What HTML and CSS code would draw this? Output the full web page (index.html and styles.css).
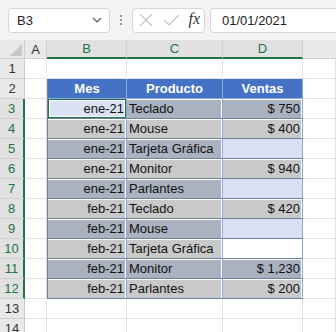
FILE: index.html
```html
<!DOCTYPE html>
<html lang="es">
<head>
    <meta charset="UTF-8">
    <title>Hoja de ventas</title>
    <link rel="stylesheet" href="styles.css">
</head>
<body>
    <!-- Formula bar -->
    <div class="toolbar">
        <div class="namebox">
            <span>B3</span>
            <svg width="12" height="8" viewBox="0 0 12 8"><path d="M2 2 L6 6 L10 2" fill="none" stroke="#555" stroke-width="1.2"/></svg>
        </div>
        <div class="dots"><i></i><i></i><i></i></div>
        <div class="fnbox">
            <svg width="16" height="16" viewBox="0 0 16 16"><path d="M2 2 L14 14 M14 2 L2 14" stroke="#c4c4c4" stroke-width="1.2"/></svg>
            <svg width="18" height="16" viewBox="0 0 18 16"><path d="M2 8 L7 13 L17 3" fill="none" stroke="#c4c4c4" stroke-width="1.2"/></svg>
            <span class="fx">fx</span>
        </div>
        <div class="formula">01/01/2021</div>
    </div>

    <!-- Sheet -->
    <div class="sheet">
        <div class="corner"><span class="tri"></span></div>
        <div class="colhead">A</div>
        <div class="colhead sel">B</div>
        <div class="colhead sel">C</div>
        <div class="colhead sel">D</div>
        <div class="colhead blank"></div>

        <div class="rowhead">1</div>
        <div class="cell"></div><div class="cell"></div><div class="cell"></div><div class="cell"></div><div class="cell"></div>

        <div class="rowhead">2</div>
        <div class="cell"></div>
        <div class="cell th first">Mes</div>
        <div class="cell th">Producto</div>
        <div class="cell th">Ventas</div>
        <div class="cell"></div>

        <div class="rowhead sel">3</div>
        <div class="cell"></div>
        <div class="cell td first num lb active">ene-21</div>
        <div class="cell td g2">Teclado</div>
        <div class="cell td num g2">$ 750</div>
        <div class="cell"></div>

        <div class="rowhead sel">4</div>
        <div class="cell"></div>
        <div class="cell td first num g1">ene-21</div>
        <div class="cell td g1">Mouse</div>
        <div class="cell td num g1">$ 400</div>
        <div class="cell"></div>

        <div class="rowhead sel">5</div>
        <div class="cell"></div>
        <div class="cell td first num g2">ene-21</div>
        <div class="cell td g2">Tarjeta Gráfica</div>
        <div class="cell td num lb"></div>
        <div class="cell"></div>

        <div class="rowhead sel">6</div>
        <div class="cell"></div>
        <div class="cell td first num g1">ene-21</div>
        <div class="cell td g1">Monitor</div>
        <div class="cell td num g1">$ 940</div>
        <div class="cell"></div>

        <div class="rowhead sel">7</div>
        <div class="cell"></div>
        <div class="cell td first num g2">ene-21</div>
        <div class="cell td g2">Parlantes</div>
        <div class="cell td num lb"></div>
        <div class="cell"></div>

        <div class="rowhead sel">8</div>
        <div class="cell"></div>
        <div class="cell td first num g1">feb-21</div>
        <div class="cell td g1">Teclado</div>
        <div class="cell td num g1">$ 420</div>
        <div class="cell"></div>

        <div class="rowhead sel">9</div>
        <div class="cell"></div>
        <div class="cell td first num g2">feb-21</div>
        <div class="cell td g2">Mouse</div>
        <div class="cell td num lb"></div>
        <div class="cell"></div>

        <div class="rowhead sel">10</div>
        <div class="cell"></div>
        <div class="cell td first num g1">feb-21</div>
        <div class="cell td g1">Tarjeta Gráfica</div>
        <div class="cell td num"></div>
        <div class="cell"></div>

        <div class="rowhead sel">11</div>
        <div class="cell"></div>
        <div class="cell td first num g2">feb-21</div>
        <div class="cell td g2">Monitor</div>
        <div class="cell td num g2">$ 1,230</div>
        <div class="cell"></div>

        <div class="rowhead sel">12</div>
        <div class="cell"></div>
        <div class="cell td first num g1">feb-21</div>
        <div class="cell td g1">Parlantes</div>
        <div class="cell td num g1">$ 200</div>
        <div class="cell"></div>

        <div class="rowhead">13</div>
        <div class="cell"></div><div class="cell"></div><div class="cell"></div><div class="cell"></div><div class="cell"></div>

        <div class="rowhead">14</div>
        <div class="cell"></div><div class="cell"></div><div class="cell"></div><div class="cell"></div><div class="cell"></div>
    </div>
</body>
</html>
```

FILE: styles.css
```css
body {
    margin: 0;
    font-family: 'Liberation Sans', Arial, sans-serif;
    background-color: #fff;
    width: 336px;
    height: 332px;
    overflow: hidden;
}

/* Formula bar */
.toolbar {
    display: flex;
    align-items: center;
    height: 40px;
    padding: 0 0 0 8px;
    background-color: #f3f3f3;
    box-sizing: border-box;
}

.namebox, .fnbox, .formula {
    height: 25px;
    box-sizing: border-box;
    background-color: #fff;
    border: 1px solid #d6d6d6;
    border-radius: 4px;
    display: flex;
    align-items: center;
    font-size: 13px;
    color: #222;
}

.namebox {
    width: 102px;
    padding: 0 6px 0 8px;
    justify-content: space-between;
}

.dots {
    width: 22px;
    display: flex;
    flex-direction: column;
    align-items: center;
    gap: 2px;
}

.dots i {
    width: 2px;
    height: 2px;
    background-color: #999;
}

.fnbox {
    width: 73px;
    padding: 0 4px 0 5px;
    justify-content: space-between;
}

.fx {
    font-family: 'Liberation Serif', serif;
    font-style: italic;
    font-size: 16px;
    color: #333;
    padding-bottom: 2px;
}

.formula {
    flex: 1;
    margin-left: 5px;
    padding-left: 11px;
    border-right: none;
    border-radius: 4px 0 0 4px;
}

/* Sheet grid */
.sheet {
    display: grid;
    grid-template-columns: 25px 22px 80px 96px 80px 1fr;
    grid-template-rows: 19px repeat(14, 20px);
    font-size: 13px;
}

.corner, .colhead, .rowhead {
    background-color: #e9e9e9;
    color: #333;
    box-sizing: border-box;
    display: flex;
    align-items: center;
    justify-content: center;
    border-right: 1px solid #d0d0d0;
    border-bottom: 1px solid #d0d0d0;
}

.corner {
    position: relative;
}

.tri {
    position: absolute;
    right: 2px;
    bottom: 2px;
    width: 0;
    height: 0;
    border-left: 12px solid transparent;
    border-bottom: 12px solid #c6c6c6;
}

.colhead.sel {
    color: #217346;
    background-color: #e1e1e1;
    border-bottom: 2px solid #217346;
}

.colhead.blank {
    border-right: none;
}

.rowhead {
    border-right: 1px solid #c8c8c8;
}

.rowhead.sel {
    color: #217346;
    background-color: #e1e1e1;
    border-right: 2px solid #217346;
}

.cell {
    box-sizing: border-box;
    border-right: 1px solid #e1e1e1;
    border-bottom: 1px solid #e1e1e1;
    display: flex;
    align-items: center;
    padding: 0 2px;
    color: #111;
    white-space: nowrap;
}

/* Table */
.th {
    background-color: #4472c4;
    color: #fff;
    font-weight: bold;
    justify-content: center;
    border-right: 1px solid #8ea9db;
    border-bottom: 1px solid #8ea9db;
}

.td {
    border-right: 1px solid #8ea9db;
    border-bottom: 1px solid #6f80a3;
}

.first {
    border-left: 1px solid #6f80a3;
}

.num {
    justify-content: flex-end;
}

.lb {
    background-color: #d9e1f2;
}

.g1 {
    background-color: #c9c9c9;
    box-shadow: inset -1px 1px 0 #fff;
}

.g2 {
    background-color: #aab1bf;
    box-shadow: inset -1px 1px 0 #fff;
}

.active {
    box-shadow: inset 0 0 0 1px #217346, inset 0 0 0 2px #fff;
}
```
